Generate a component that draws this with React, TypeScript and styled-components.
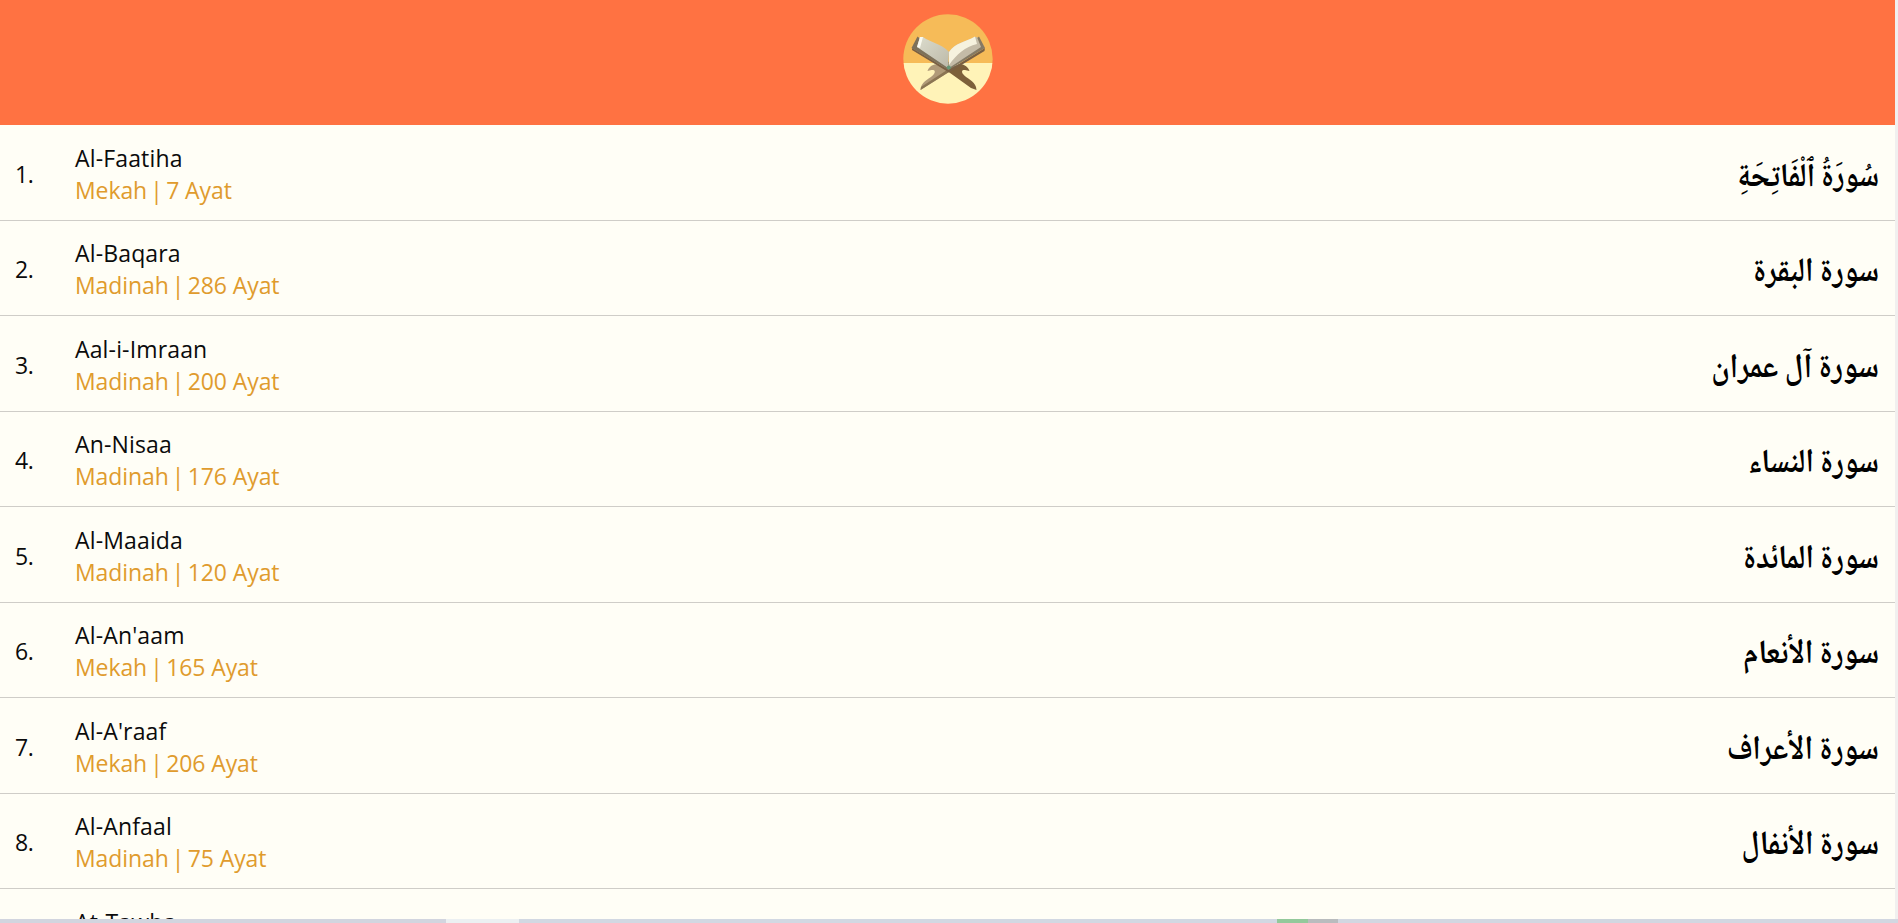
import React from "react";
import styled, { createGlobalStyle } from "styled-components";

const GlobalStyle = createGlobalStyle`
  * { box-sizing: border-box; }
  html, body { margin: 0; height: 100%; overflow: hidden; }
  body { background: #fffef6; font-family: "Segoe UI", "Open Sans", sans-serif; }
`;

const Screen = styled.div`
  display: flex;
  flex-direction: column;
  height: 923px;
  overflow: hidden;
`;

const Body = styled.div`
  display: flex;
  flex: 1;
  min-height: 0;
`;

const Page = styled.main`
  flex: 1;
  min-width: 0;
  overflow: hidden;
  background: #fffef6;
`;

const ScrollTrack = styled.div`
  width: 3px;
  background: #f1f0ef;
`;

const Header = styled.header`
  display: flex;
  justify-content: center;
  height: 125px;
  padding-top: 14px;
  background: #ff7242;
`;

const List = styled.ol`
  list-style: none;
  margin: 0;
  padding: 0.25px 0 0;
`;

const Row = styled.li`
  display: flex;
  align-items: center;
  height: 95.5px;
  padding: 2px 16px 0 15px;
  border-bottom: 1px solid #cfcdc8;
  color: #0b0b0b;
`;

const Index = styled.span`
  width: 60px;
  font-size: 23px;
  line-height: 32px;
  letter-spacing: -0.5px;
`;

const Info = styled.div`
  flex: 1;
  font-size: 23px;
  line-height: 32px;
`;

const Name = styled.div`
  letter-spacing: 0.15px;
`;

const Meta = styled.div`
  color: #e09b2d;
  letter-spacing: -0.1px;
`;

const Bar = styled.span`
  margin: 0 -2.4px 0 -2.8px;
`;

const Arabic = styled.span<{ $size: number }>`
  padding-top: 12px;
  font-family: "Noto Naskh Arabic", "Traditional Arabic", "DejaVu Sans", sans-serif;
  font-size: ${(p) => p.$size}px;
  font-weight: 700;
  line-height: 40px;
  color: #000;
  white-space: nowrap;
  transform: scaleY(1.14);
  transform-origin: 50% 70%;
`;

const Taskbar = styled.footer`
  display: flex;
  height: 4px;
  background: #d2d7e1;
`;

const Segment = styled.div<{ $width: number; $color: string }>`
  width: ${(p) => p.$width}px;
  background: ${(p) => p.$color};
`;

const surahs = [
  ["Al-Faatiha", "Mekah", 7, "سُورَةُ ٱلْفَاتِحَةِ", 29],
  ["Al-Baqara", "Madinah", 286, "سورة البقرة", 29.7],
  ["Aal-i-Imraan", "Madinah", 200, "سورة آل عمران", 30.3],
  ["An-Nisaa", "Madinah", 176, "سورة النساء", 29.5],
  ["Al-Maaida", "Madinah", 120, "سورة المائدة", 29.5],
  ["Al-An'aam", "Mekah", 165, "سورة الأنعام", 29.8],
  ["Al-A'raaf", "Mekah", 206, "سورة الأعراف", 29.9],
  ["Al-Anfaal", "Madinah", 75, "سورة الأنفال", 29.7],
  ["At-Tawba", "Madinah", 129, "سورة التوبة", 29.7],
] as const;

function Logo() {
  return (
    <svg width="90" height="90" viewBox="0 0 90 90">
      <defs>
        <clipPath id="disc"><circle cx="45" cy="45" r="44.7" /></clipPath>
        <linearGradient id="left" x1="0" y1="0" x2="1" y2="1">
          <stop offset="0" stopColor="#dcdccd" />
          <stop offset="1" stopColor="#bcb9a8" />
        </linearGradient>
      </defs>
      <g clipPath="url(#disc)">
        <rect width="90" height="50" fill="#f6bb58" />
        <rect y="49" width="90" height="41" fill="#fff3b8" />
      </g>
      <path d="M44 54L33 50.5C29 50.5 26 53 24.5 57L28.5 56C31 55.5 33 56.5 31 60C28 64 19.5 67 18 73L17.5 76L46 58Z" fill="#b09a78" />
      <path d="M17.5 76L46 58L44 56L18 73Z" fill="#8b7553" />
      <path d="M46 54L57 50C62 50.5 65 53 66.5 57L62 56C59.5 55.5 58 57 60 60C63 64 71.5 67 73 73L73.5 76L68 74L45 57.5Z" fill="#7d603a" />
      <path d="M9 34L46 56L82 34L81.5 37L46 58.5L9 36Z" fill="#795f43" />
      <path d="M14.5 22.5L8.5 34L45.5 56V48Z" fill="#7d715a" />
      <path d="M76 22.5L82 34L45.5 56V48Z" fill="#857a64" />
      <path d="M17 23L14 33L45 54L46 38C38 29 28 29 20 23Z" fill="url(#left)" />
      <path d="M74 23L78 33L46 54L46 38C52 29 62 28 72 23Z" fill="#c4bba7" />
      <path d="M20 23L17 34L14 33L17 23Z" fill="#fafaf0" />
      <path d="M72 22.5L74 30C62 33 54 40 46 51V38C52 29 62 28 72 22.5Z" fill="#f6f2df" />
      <circle cx="45.8" cy="53.5" r="2" fill="#659675" />
    </svg>
  );
}

export default function App() {
  return (
    <>
      <GlobalStyle />
      <Screen>
        <Body>
          <Page>
            <Header><Logo /></Header>
            <List>
              {surahs.map(([name, place, verses, arabic, size], i) => (
                <Row key={name}>
                  <Index>{i + 1}.</Index>
                  <Info>
                    <Name>{name}</Name>
                    <Meta>{place} <Bar>|</Bar> {verses} Ayat</Meta>
                  </Info>
                  <Arabic lang="ar" dir="rtl" $size={size}>{arabic}</Arabic>
                </Row>
              ))}
            </List>
          </Page>
          <ScrollTrack />
        </Body>
        <Taskbar>
          <Segment $width={446} $color="#d2d5df" />
          <Segment $width={73} $color="#ecf0f2" />
          <Segment $width={758} $color="#d2d8e2" />
          <Segment $width={31} $color="#93c99b" />
          <Segment $width={30} $color="#b9bcbe" />
        </Taskbar>
      </Screen>
    </>
  );
}
